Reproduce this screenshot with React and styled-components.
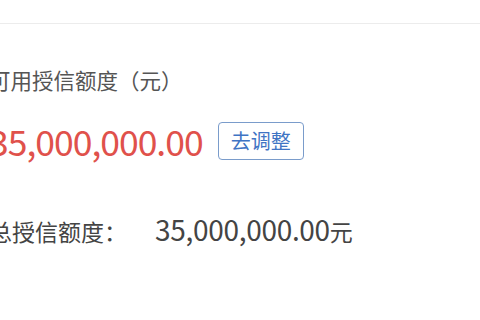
import React from 'react';
import styled, { createGlobalStyle } from 'styled-components';

const GlobalStyle = createGlobalStyle`
  html, body {
    margin: 0;
    padding: 0;
    background: #ffffff;
    overflow: hidden;
  }
  body {
    font-family: "Noto Sans CJK SC", "Noto Sans", sans-serif;
  }
`;

const Page = styled.div`
  width: 480px;
  height: 320px;
  background: #fff;
  overflow: hidden;
`;

const TopBar = styled.div`
  height: 23px;
  border-bottom: 1px solid #ececec;
`;

const Card = styled.section`
  margin-left: -11px;
  padding-top: 40px;
  display: flex;
  flex-direction: column;
`;

const Label = styled.div`
  font-size: 21.5px;
  line-height: 32px;
  color: #555;
`;

const AmountRow = styled.div`
  display: flex;
  align-items: center;
  gap: 15px;
  margin-top: 25px;
`;

const Amount = styled.span`
  font-size: 35.5px;
  line-height: 40px;
  letter-spacing: -1px;
  color: #e0514b;
`;

const AdjustButton = styled.button`
  font-family: inherit;
  font-size: 20px;
  line-height: 24px;
  color: #3f74c4;
  background: #fff;
  border: 1px solid #7a9ccb;
  border-radius: 4px;
  padding: 6px 12px;
  cursor: pointer;
`;

const TotalRow = styled.div`
  display: flex;
  align-items: baseline;
  margin-top: 48px;
  color: #444;
`;

const TotalLabel = styled.span`
  font-size: 23px;
  width: 166px;
`;

const TotalValue = styled.span`
  font-size: 28px;
  letter-spacing: -0.3px;

  small {
    font-size: 23px;
    letter-spacing: 0;
  }
`;

export default function App() {
  return (
    <Page>
      <GlobalStyle />
      <TopBar />
      <Card>
        <Label>可用授信额度（元）</Label>
        <AmountRow>
          <Amount>35,000,000.00</Amount>
          <AdjustButton>去调整</AdjustButton>
        </AmountRow>
        <TotalRow>
          <TotalLabel>总授信额度：</TotalLabel>
          <TotalValue>35,000,000.00<small>元</small></TotalValue>
        </TotalRow>
      </Card>
    </Page>
  );
}
